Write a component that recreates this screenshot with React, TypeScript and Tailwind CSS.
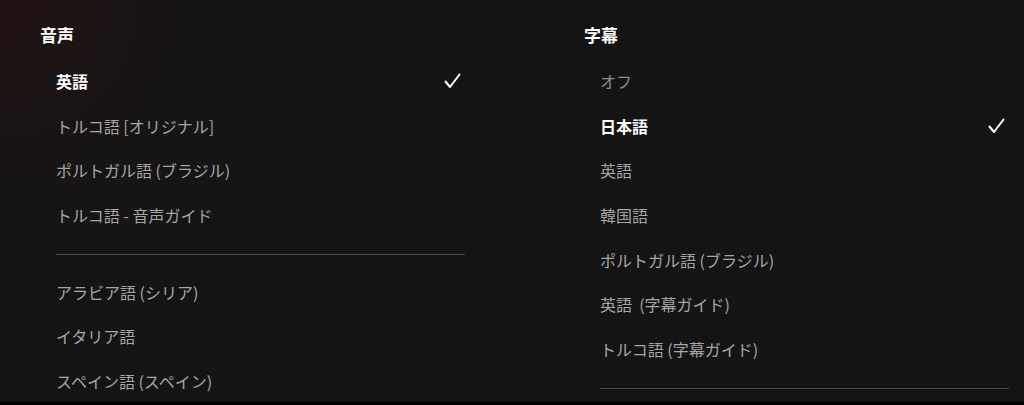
import React from 'react';

type Option = { label: string; selected?: boolean; dim?: boolean };

const audio: Option[][] = [
  [
    { label: '英語', selected: true },
    { label: 'トルコ語 [オリジナル]' },
    { label: 'ポルトガル語 (ブラジル)' },
    { label: 'トルコ語 - 音声ガイド' },
  ],
  [
    { label: 'アラビア語 (シリア)' },
    { label: 'イタリア語' },
    { label: 'スペイン語 (スペイン)' },
  ],
];

const subtitles: Option[][] = [
  [
    { label: 'オフ', dim: true },
    { label: '日本語', selected: true },
    { label: '英語' },
    { label: '韓国語' },
    { label: 'ポルトガル語 (ブラジル)' },
    { label: '英語  (字幕ガイド)' },
    { label: 'トルコ語 (字幕ガイド)' },
  ],
  [],
];

const Check = () => (
  <svg width="17" height="16" viewBox="0 0 17 16" fill="none" className="mr-[4px]">
    <path d="M1.5 8.5 L6 14 L15.5 1.5" stroke="#ffffff" strokeWidth="2" strokeLinecap="round" strokeLinejoin="round" />
  </svg>
);

const Row = ({ opt }: { opt: Option }) => (
  <div className="flex h-[44.6px] items-center justify-between">
    <span
      className={
        opt.selected
          ? 'whitespace-pre text-[16px] font-bold text-white'
          : opt.dim
            ? 'whitespace-pre text-[16px] text-[#8f8f8f]'
            : 'whitespace-pre text-[16px] text-[#a6a6a6]'
      }
    >
      {opt.label}
    </span>
    {opt.selected && <Check />}
  </div>
);

const Column = ({ title, groups }: { title: string; groups: Option[][] }) => (
  <div className="w-[425px] shrink-0">
    <h2 className="mt-[23px] flex h-[24px] items-center text-[17px] font-bold text-white">{title}</h2>
    <div className="mt-[12px] pl-[16px]">
      {groups.map((g, i) => (
        <div key={i}>
          {i > 0 && <div className="mt-[17px] mb-[14px] h-px bg-[#4a4a4a]" />}
          {g.map((o) => (
            <Row key={o.label} opt={o} />
          ))}
          {i === 0 && groups.length > 1 && groups[1].length === 0 && (
            <div className="mt-[17px] h-px bg-[#4a4a4a]" />
          )}
        </div>
      ))}
    </div>
  </div>
);

const App: React.FC = () => {
  return (
    <div
      className="relative flex h-[405px] w-[1024px] overflow-hidden bg-[#141414] bg-[radial-gradient(circle_at_0%_0%,#221313_0%,#171414_16%,#141414_35%)] pl-[40px]"
      style={{ fontFamily: '"Noto Sans CJK JP", "Noto Sans", sans-serif' }}
    >
      <div className="mr-[119px]">
        <Column title="音声" groups={audio} />
      </div>
      <Column title="字幕" groups={subtitles} />
      <div className="absolute bottom-0 left-0 h-[3px] w-full bg-black" />
    </div>
  );
};

export default App;
